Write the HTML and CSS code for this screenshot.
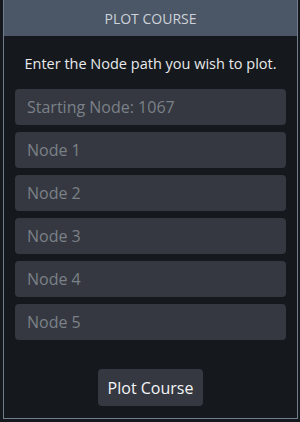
FILE: index.html
```html
<!DOCTYPE html>
<html>
<head>
<meta charset="utf-8">
<link rel="stylesheet" href="styles.css">
</head>
<body>
<div class="panel">
  <div class="header">PLOT COURSE</div>
  <div class="content">
    <p class="intro">Enter the Node path you wish to plot.</p>
    <div class="fields">
      <input class="field" type="text" placeholder="Starting Node: 1067">
      <input class="field" type="text" placeholder="Node 1">
      <input class="field" type="text" placeholder="Node 2">
      <input class="field" type="text" placeholder="Node 3">
      <input class="field" type="text" placeholder="Node 4">
      <input class="field" type="text" placeholder="Node 5">
    </div>
    <div class="actions">
      <button class="btn" type="button">Plot Course</button>
    </div>
  </div>
</div>
</body>
</html>
```

FILE: styles.css
```css
html, body {
  margin: 0;
  padding: 0;
  background: #15181c;
  width: 300px;
  height: 422px;
  overflow: hidden;
  font-family: "Open Sans", "Noto Sans", sans-serif;
}
.panel {
  margin-left: 3px;
  width: 295px;
  height: 419px;
  box-sizing: border-box;
  border: 1px solid #6f7d8c;
  border-top: none;
  background: #15181c;
  display: flex;
  flex-direction: column;
}
.header {
  height: 36px;
  background: #4b5666;
  color: #cdd3da;
  font-size: 14px;
  display: flex;
  align-items: center;
  justify-content: center;
}
.content {
  padding: 0 11px;
  display: flex;
  flex-direction: column;
}
.intro {
  margin: 18px 0 0;
  height: 35px;
  text-align: center;
  color: #e8eaed;
  font-size: 14.5px;
  line-height: 20px;
}
.fields {
  display: flex;
  flex-direction: column;
  gap: 7px;
}
.field {
  height: 36px;
  box-sizing: border-box;
  border: none;
  border-radius: 4px;
  background: #353840;
  padding: 0 12px;
  font-family: inherit;
  font-size: 16px;
  color: #e8eaed;
  outline: none;
  width: 100%;
}
.field::placeholder {
  color: #7b8188;
}
.actions {
  display: flex;
  justify-content: center;
  margin-top: 29px;
}
.btn {
  width: 105px;
  height: 37px;
  border: none;
  border-radius: 4px;
  background: #353840;
  color: #f4f5f7;
  font-family: inherit;
  font-size: 16px;
  padding: 0;
}
```
